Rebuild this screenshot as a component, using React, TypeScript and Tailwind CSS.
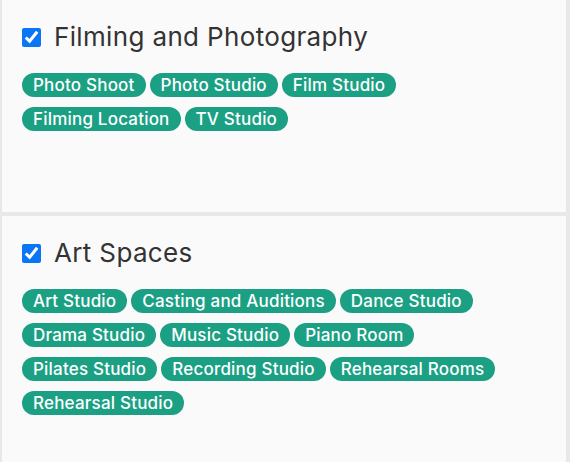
import React from "react";

const groups = [
  {
    title: "Filming and Photography",
    tags: ["Photo Shoot", "Photo Studio", "Film Studio", "Filming Location", "TV Studio"],
    minH: "min-h-[212px]",
  },
  {
    title: "Art Spaces",
    tags: [
      "Art Studio",
      "Casting and Auditions",
      "Dance Studio",
      "Drama Studio",
      "Music Studio",
      "Piano Room",
      "Pilates Studio",
      "Recording Studio",
      "Rehearsal Rooms",
      "Rehearsal Studio",
    ],
    minH: "min-h-[260px]",
  },
];

export default function App() {
  return (
    <div
      className="w-[570px] h-[462px] overflow-hidden bg-[#e8e8e8] pl-[2px] pr-[4px] flex flex-col gap-[4px]"
      style={{ fontFamily: "Inter, 'Noto Sans', sans-serif" }}
    >
      {groups.map((g) => (
        <div key={g.title} className={`bg-[#fafafa] ${g.minH} px-[20px] pt-[24px] pb-[20px] shrink-0`}>
          <label className="flex items-center gap-[13px] h-[26px]">
            <input type="checkbox" defaultChecked className="w-[19px] h-[19px] m-0 accent-[#0a75f5]" />
            <span className="text-[26px] leading-none text-[#333333] tracking-[0.35px]">{g.title}</span>
          </label>
          <div className="flex flex-wrap gap-x-[4px] gap-y-[10px] mt-[23px]">
            {g.tags.map((t) => (
              <span
                key={t}
                className="h-[24px] px-[11px] rounded-full bg-[#1ba084] text-white text-[17px] font-medium leading-[24px] tracking-[0.2px] whitespace-nowrap"
              >
                {t}
              </span>
            ))}
          </div>
        </div>
      ))}
    </div>
  );
}
